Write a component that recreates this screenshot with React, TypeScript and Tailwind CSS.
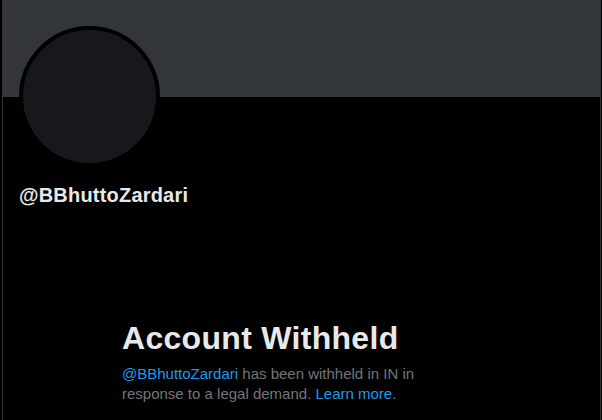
export default function App() {
  return (
    <div className="min-h-[420px] w-[602px] bg-black" style={{ fontFamily: '"Liberation Sans", Arial, sans-serif' }}>
      <div className="ml-[2px] mr-[1px] min-h-[420px] border-x border-[#2f3336]">
        {/* banner */}
        <div className="h-[97px] bg-[#333639]" />

        {/* avatar + handle */}
        <div className="px-4">
          <div className="-mt-[71px] h-[141px] w-[141px] rounded-full border-4 border-black bg-[#16181c]" />
          <div className="mt-[16px] text-[20px] font-bold leading-6 tracking-[0.2px] text-[#e7e9ea]">@BBhuttoZardari</div>
        </div>

        {/* withheld notice */}
        <div className="ml-[119px] mt-[113px] w-[340px]">
          <h2 className="text-[32px] font-bold leading-9 tracking-[0.3px] text-[#e7e9ea]">Account Withheld</h2>
          <p className="mt-[8px] text-[15px] leading-5 text-[#71767b]">
            <span className="text-[#1d9bf0]">@BBhuttoZardari</span> has been withheld in IN in response to a legal demand.{' '}
            <a href="#" className="text-[#1d9bf0]">Learn more.</a>
          </p>
        </div>
      </div>
    </div>
  )
}
